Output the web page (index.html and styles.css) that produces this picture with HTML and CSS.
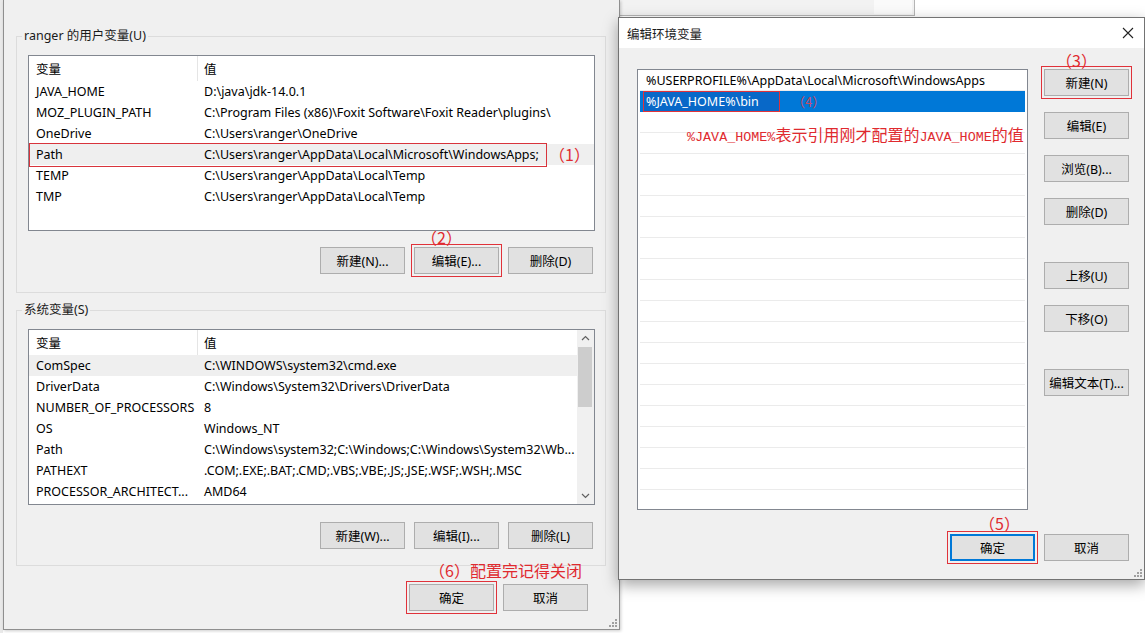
FILE: index.html
```html
<!DOCTYPE html>
<html lang="zh-CN">
<head>
    <meta charset="UTF-8">
    <title>环境变量</title>
    <link rel="stylesheet" href="styles.css">
</head>
<body>
<div class="desk">

    <!-- window behind, only its lower edge shows -->
    <div class="back-win"><span class="back-btn"></span></div>

    <!-- 环境变量 -->
    <div class="env-win">
        <fieldset class="group">
            <legend>ranger 的用户变量(U)</legend>
            <div class="list">
                <div class="list-head"><span class="c1">变量</span><span class="c2">值</span></div>
                <div class="row"><span class="c1">JAVA_HOME</span><span class="c2">D:\java\jdk-14.0.1</span></div>
                <div class="row"><span class="c1">MOZ_PLUGIN_PATH</span><span class="c2">C:\Program Files (x86)\Foxit Software\Foxit Reader\plugins\</span></div>
                <div class="row"><span class="c1">OneDrive</span><span class="c2">C:\Users\ranger\OneDrive</span></div>
                <div class="row hover"><span class="c1">Path</span><span class="c2">C:\Users\ranger\AppData\Local\Microsoft\WindowsApps;</span></div>
                <div class="row"><span class="c1">TEMP</span><span class="c2">C:\Users\ranger\AppData\Local\Temp</span></div>
                <div class="row"><span class="c1">TMP</span><span class="c2">C:\Users\ranger\AppData\Local\Temp</span></div>
                <div class="mark-box path-mark"></div>
                <span class="note step-1">（1）</span>
            </div>
            <div class="btns">
                <button class="btn">新建(N)...</button>
                <button class="btn marked">编辑(E)...<span class="note step-2">（2）</span></button>
                <button class="btn">删除(D)</button>
            </div>
        </fieldset>

        <fieldset class="group sys">
            <legend>系统变量(S)</legend>
            <div class="list scroll-list">
                <div class="list-body">
                    <div class="list-head"><span class="c1">变量</span><span class="c2">值</span></div>
                    <div class="row hover"><span class="c1">ComSpec</span><span class="c2">C:\WINDOWS\system32\cmd.exe</span></div>
                    <div class="row"><span class="c1">DriverData</span><span class="c2">C:\Windows\System32\Drivers\DriverData</span></div>
                    <div class="row"><span class="c1">NUMBER_OF_PROCESSORS</span><span class="c2">8</span></div>
                    <div class="row"><span class="c1">OS</span><span class="c2">Windows_NT</span></div>
                    <div class="row"><span class="c1">Path</span><span class="c2">C:\Windows\system32;C:\Windows;C:\Windows\System32\Wb...</span></div>
                    <div class="row"><span class="c1">PATHEXT</span><span class="c2">.COM;.EXE;.BAT;.CMD;.VBS;.VBE;.JS;.JSE;.WSF;.WSH;.MSC</span></div>
                    <div class="row"><span class="c1">PROCESSOR_ARCHITECT...</span><span class="c2">AMD64</span></div>
                </div>
                <div class="scrollbar">
                    <svg class="arrow" width="17" height="17" viewBox="0 0 17 17"><polyline points="5,10 8.5,6.5 12,10" fill="none" stroke="#606060" stroke-width="1.2"/></svg>
                    <div class="thumb"></div>
                    <svg class="arrow down" width="17" height="17" viewBox="0 0 17 17"><polyline points="5,7 8.5,10.5 12,7" fill="none" stroke="#606060" stroke-width="1.2"/></svg>
                </div>
            </div>
            <div class="btns">
                <button class="btn">新建(W)...</button>
                <button class="btn">编辑(I)...</button>
                <button class="btn">删除(L)</button>
            </div>
        </fieldset>

        <div class="footer">
            <button class="btn marked ok">确定<span class="note step-6">（6）配置完记得关闭</span></button>
            <button class="btn">取消</button>
        </div>

        <svg class="grip" width="8" height="8" viewBox="0 0 8 8" fill="#a0a0a0">
            <rect x="6" y="0" width="2" height="2"/><rect x="3" y="3" width="2" height="2"/><rect x="6" y="3" width="2" height="2"/>
            <rect x="0" y="6" width="2" height="2"/><rect x="3" y="6" width="2" height="2"/><rect x="6" y="6" width="2" height="2"/>
        </svg>
    </div>

    <!-- 编辑环境变量 -->
    <div class="edit-win">
        <div class="title-bar">
            <span class="title">编辑环境变量</span>
            <svg class="close" width="12" height="12" viewBox="0 0 12 12"><path d="M1 1 L11 11 M11 1 L1 11" stroke="#222" stroke-width="1.1"/></svg>
        </div>
        <div class="edit-body">
            <div class="edit-main">
                <div class="path-list">
                    <div class="path-rows">
                        <div class="path-row">%USERPROFILE%\AppData\Local\Microsoft\WindowsApps</div>
                        <div class="path-row selected"><span class="edit-box">%JAVA_HOME%\bin</span><span class="step-4">（4）</span></div>
                    </div>
                    <span class="note step-note"><span class="mono">%JAVA_HOME%</span>表示引用刚才配置的<span class="mono">JAVA_HOME</span>的值</span>
                </div>
                <div class="side-btns">
                    <button class="btn marked">新建(N)<span class="note step-3">（3）</span></button>
                    <button class="btn">编辑(E)</button>
                    <button class="btn">浏览(B)...</button>
                    <button class="btn">删除(D)</button>
                    <button class="btn far">上移(U)</button>
                    <button class="btn">下移(O)</button>
                    <button class="btn far">编辑文本(T)...</button>
                </div>
            </div>
            <div class="edit-footer">
                <button class="btn marked default">确定<span class="note step-5">（5）</span></button>
                <button class="btn">取消</button>
            </div>
        </div>
        <svg class="grip" width="8" height="8" viewBox="0 0 8 8" fill="#a0a0a0">
            <rect x="6" y="0" width="2" height="2"/><rect x="3" y="3" width="2" height="2"/><rect x="6" y="3" width="2" height="2"/>
            <rect x="0" y="6" width="2" height="2"/><rect x="3" y="6" width="2" height="2"/><rect x="6" y="6" width="2" height="2"/>
        </svg>
    </div>

</div>
</body>
</html>
```

FILE: styles.css
```css
* {
    box-sizing: border-box;
}

body {
    margin: 0;
    width: 1145px;
    height: 633px;
    overflow: hidden;
    background: #fff;
    font-family: "Noto Sans", "Noto Sans CJK SC", sans-serif;
    font-size: 12.5px;
    color: #000;
}

.desk {
    position: relative;
    width: 1145px;
    height: 633px;
    background: linear-gradient(to right, #e9e9e9 0 3px, #fff 3px);
}

/* ---------- window behind ---------- */
.back-win {
    position: absolute;
    left: 612px;
    top: -4px;
    width: 303px;
    height: 20px;
    background: #f2f2f2;
    border: 1px solid #b5b5b5;
}

.back-btn {
    position: absolute;
    right: 2px;
    top: 3px;
    width: 38px;
    height: 14px;
    background: #fafafa;
}

/* ---------- buttons ---------- */
.btn {
    position: relative;
    width: 85px;
    height: 27px;
    padding: 0;
    background: #e1e1e1;
    border: 1px solid #adadad;
    font-family: inherit;
    font-size: 12.5px;
    color: #000;
}

.btn.marked {
    outline: 1px solid #e0323a;
    outline-offset: 2px;
}

.btn.default {
    border-color: #0078d7;
    box-shadow: inset 0 0 0 1px #0078d7;
}

/* red hand-drawn notes */
.note {
    position: absolute;
    white-space: nowrap;
    font-family: "Noto Sans CJK SC", sans-serif;
    font-size: 16px;
    line-height: 18px;
    color: #e02a2f;
}

.mono {
    font-family: "Liberation Mono", monospace;
    font-size: 13.4px;
}

/* ---------- 环境变量 window ---------- */
.env-win {
    position: absolute;
    left: 3px;
    top: 0;
    width: 617px;
    height: 630px;
    background: #f0f0f0;
    border: 1px solid #8f8f8f;
    border-top: none;
    padding: 0 13px 0 12px;
    box-shadow: 1px 1px 3px rgba(0, 0, 0, 0.2);
}

.group {
    margin: 28px 0 0;
    height: 265px;
    min-width: 0;
    padding: 11px 10px 0 11px;
    border: 1px solid #dcdcdc;
}

.group.sys {
    margin-top: 9px;
    height: 264px;
}

.group legend {
    margin-left: -6px;
    padding: 0 2px;
    line-height: 16px;
    color: #1a1a1a;
}

.list {
    position: relative;
    height: 176px;
    background: #fff;
    border: 1px solid #828790;
}

.list-head,
.row {
    display: flex;
    align-items: center;
    white-space: nowrap;
}

.list-head {
    height: 25px;
}

.list-head .c1 {
    border-right: 1px solid #e5e5e5;
    align-self: stretch;
    display: flex;
    align-items: center;
}

.row {
    height: 21px;
}

.row.hover {
    background: #efefef;
}

.c1 {
    width: 169px;
    padding-left: 7px;
    flex-shrink: 0;
}

.c2 {
    padding-left: 6px;
}

.mark-box {
    position: absolute;
    border: 1px solid #d8343c;
}

.path-mark {
    left: 0;
    top: 87px;
    width: 518px;
    height: 24px;
}

.step-1 {
    left: 520px;
    top: 89px;
}

.step-2 {
    left: 6px;
    top: -20px;
}

.step-6 {
    left: 19px;
    top: -24px;
}

.scroll-list {
    display: flex;
}

.list-body {
    flex: 1;
}

.scrollbar {
    width: 17px;
    background: #f0f0f0;
    display: flex;
    flex-direction: column;
}

.scrollbar .arrow {
    flex-shrink: 0;
}

.scrollbar .thumb {
    margin: 0 2px 0 1px;
    height: 60px;
    background: #cdcdcd;
}

.scrollbar .down {
    margin-top: auto;
}

.btns {
    display: flex;
    justify-content: flex-end;
    gap: 9px;
    margin-top: 16px;
    padding-right: 2px;
}

.sys .btns {
    margin-top: 17px;
}

.footer {
    display: flex;
    justify-content: flex-end;
    gap: 9px;
    margin-top: 18px;
    padding-right: 18px;
}

.grip {
    position: absolute;
    right: 2px;
    bottom: 2px;
}

/* ---------- 编辑环境变量 dialog ---------- */
.edit-win {
    position: absolute;
    left: 618px;
    top: 17px;
    width: 527px;
    height: 563px;
    background: #f0f0f0;
    border: 1px solid #737373;
    box-shadow: 0 5px 14px rgba(0, 0, 0, 0.35);
}

.title-bar {
    height: 30px;
    background: #fff;
    display: flex;
    align-items: center;
    justify-content: space-between;
    padding: 0 10px 0 8px;
}

.title {
    color: #1a1a1a;
}

.edit-body {
    padding: 21px 15px 0 18px;
}

.edit-main {
    display: flex;
    gap: 16px;
}

.path-list {
    position: relative;
    width: 391px;
    height: 441px;
    background: #fff;
    border: 1px solid #828790;
    padding: 0 2px;
    overflow: hidden;
}

.path-rows {
    height: 100%;
    background: repeating-linear-gradient(to bottom, transparent 0 20px, #ebebeb 20px 21px);
}

.path-row {
    height: 21px;
    padding-left: 6px;
    display: flex;
    align-items: center;
    white-space: nowrap;
}

.path-row.selected {
    background: #0078d7;
    color: #fff;
    padding-left: 3px;
    align-items: stretch;
}

.edit-box {
    width: 137px;
    padding-left: 2px;
    display: flex;
    align-items: center;
    background: #0868c8;
    border: 1px solid #e0323a;
}

.step-4 {
    margin-left: 12px;
    display: flex;
    align-items: center;
    font-family: "Noto Sans CJK SC", sans-serif;
    font-size: 13px;
    color: #c44a68;
}

.step-note {
    left: 49px;
    top: 55px;
}

.side-btns {
    display: flex;
    flex-direction: column;
    gap: 16px;
}

.side-btns .far {
    margin-top: 21px;
}

.step-3 {
    left: 11px;
    top: -19px;
}

.edit-footer {
    display: flex;
    justify-content: flex-end;
    gap: 9px;
    margin-top: 24px;
}

.step-5 {
    left: 28px;
    top: -21px;
}
```
